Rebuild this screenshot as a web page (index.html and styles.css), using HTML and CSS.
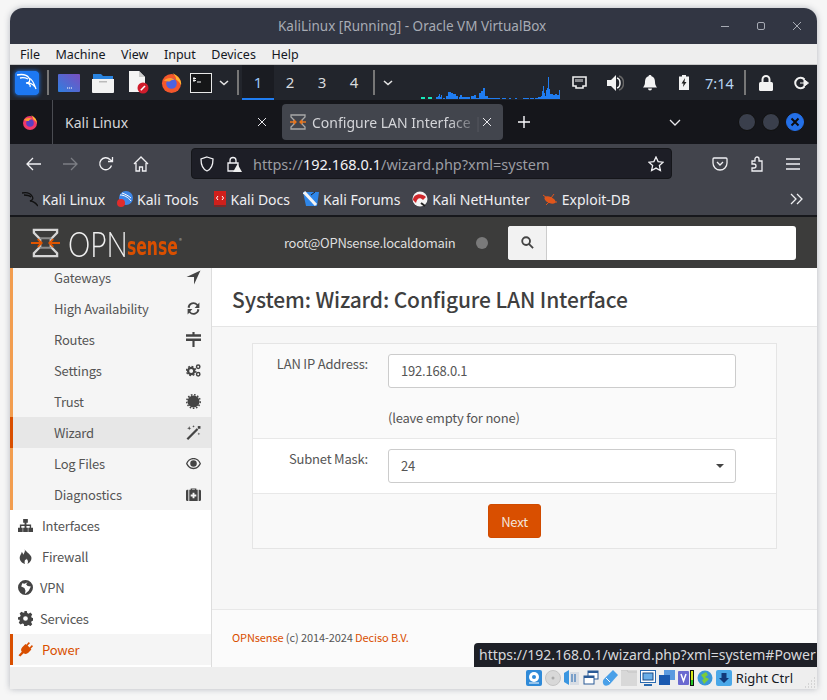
FILE: index.html
```html
<!DOCTYPE html>
<html lang="en">

<head>
    <meta charset="UTF-8">
    <title>KaliLinux [Running] - Oracle VM VirtualBox</title>
    <link rel="stylesheet" href="styles.css">
</head>

<body>
    <div class="window">
        <div class="titlebar">
            <span class="title">KaliLinux [Running] - Oracle VM VirtualBox</span>
            <svg class="win-btn min" viewBox="0 0 12 12"><path d="M2 6.5h8" /></svg>
            <svg class="win-btn max" viewBox="0 0 12 12"><rect x="2.5" y="2.5" width="7" height="7" rx="1.5" /></svg>
            <svg class="win-btn close" viewBox="0 0 12 12"><path d="M2 2l8 8M10 2l-8 8" /></svg>
        </div>
        <div class="menubar">
            <span>File</span><span>Machine</span><span>View</span><span>Input</span><span>Devices</span><span>Help</span>
        </div>

        <!-- xfce panel -->
        <div class="panel">
            <svg class="kali-btn" viewBox="0 0 24 24">
                <rect width="24" height="24" rx="3" fill="#1d78f2" />
                <path d="M2 4c5-1 10 0 12 3s0 5-3 5c3 0 5 2 4 4M14 7c3 1 5 5 7 11M5 7c4-1 6 0 8 1M11 12c3-1 7 1 9 4" fill="none" stroke="#fff" stroke-width="1.3" />
            </svg>
            <i class="sep s1"></i>
            <svg class="screen" viewBox="0 0 22 18">
                <defs>
                    <linearGradient id="g1" x1="0" y1="1" x2="1" y2="0">
                        <stop offset="0" stop-color="#2f7fe0" />
                        <stop offset="1" stop-color="#7a4fc0" />
                    </linearGradient>
                </defs>
                <rect width="22" height="18" rx="1" fill="url(#g1)" />
                <path d="M9 14h1.2M11 14h1.2M13 14h1" stroke="#fff" stroke-width="1" />
            </svg>
            <svg class="folder" viewBox="0 0 22 20">
                <path d="M1 1h8l2 2h10v3H1z" fill="#2a84e0" />
                <path d="M0 6h22v13a1 1 0 0 1-1 1H1a1 1 0 0 1-1-1z" fill="#f2f2f2" />
                <rect x="7" y="8" width="8" height="1.5" fill="#bbb" />
            </svg>
            <svg class="file" viewBox="0 0 21 23">
                <path d="M1 0h10l6 6v15H1z" fill="#f4f4f4" />
                <path d="M11 0l6 6h-6z" fill="#ccc" />
                <circle cx="15" cy="17" r="5.5" fill="#d01c2c" />
                <path d="M12.8 19.2l4.2-4.2" stroke="#fff" stroke-width="1.6" />
            </svg>
            <svg class="fox" viewBox="0 0 22 22">
                <circle cx="11" cy="12" r="10" fill="#f3572c" />
                <path d="M12 1c6 3 10 8 9 13-1-3-3-5-5-6 0-3-2-5-4-7z" fill="#ffb52e" />
                <circle cx="11" cy="12" r="5.5" fill="#4a63e0" />
                <path d="M3 9c3-3 8-4 11-1-3 0-4 1-5 2-2 0-4 0-6-1z" fill="#ff9a2e" />
            </svg>
            <svg class="term" viewBox="0 0 22 20">
                <rect x=".5" y=".5" width="21" height="19" fill="#151618" stroke="#e8e8e8" />
                <path d="M4 4v5M3 5.5h3M3 7.5h3M7 9h4" stroke="#eee" stroke-width="1" fill="none" />
            </svg>
            <svg class="chev c1" viewBox="0 0 10 6"><path d="M1 1l4 3.5L9 1" /></svg>
            <i class="sep s2"></i>
            <div class="workspaces">
                <span class="on">1</span><span>2</span><span>3</span><span>4</span>
            </div>
            <i class="sep s3"></i>
            <svg class="chev c2" viewBox="0 0 10 6"><path d="M1 1l4 3.5L9 1" /></svg>
            <svg class="netload" viewBox="0 0 145 25">
                <path d="M3 24v-2h4v2zM10 24v-2h4v2z" fill="#17e8b8" />
                <path d="M18 24v-2h2v2zM20 24v-3h1v3zM21 24v-5h1v5zM22 24v-2h1v2zM23 24v-4h1v4zM25 24v-1h2v1zM28 24v-3h2v3zM30 24v-7h3v7zM33 24v-6h2v6zM35 24v-5h3v5zM38 24v-3h2v3zM41 24v-2h1v2zM42 24v-4h2v4zM44 24v-2h6v2zM50 24v-2h2v2zM53 24v-3h3v3zM56 24v-4h2v4zM58 24v-1h3v1zM61 24v-6h2v6zM63 24v-8h2v8zM65 24v-11h2v11zM67 24v-3h3v3zM70 24v-1h6v1zM76 24v-1h6v1zM84 24v-1h4v1zM91 24v-1h2v1zM97 24v-1h2v1zM105 24v-1h6v1zM112 24v-1h4v1zM117 24v-1h3v1zM120 24v-2h3v2zM123 24v-3h1v3zM124 24v-8h1v8zM125 24v-13h1v13zM126 24v-6h1v6zM127 24v-3h1v3zM128 24v-9h1v9zM129 24v-11h1v11zM130 24v-22h1v22zM131 24v-10h1v10zM132 24v-5h3v5zM135 24v-4h2v4zM137 24v-5h2v5zM139 24v-4h2v4zM141 24v-9h1v9z" fill="#1f7cf0" />
            </svg>
            <svg class="eth" viewBox="0 0 15 13">
                <path d="M1 1h13v9h-3v2H4v-2H1z" fill="none" stroke="#eee" stroke-width="1.6" />
                <path d="M4 3v3M6 3v3M8 3v3M10 3v3" stroke="#eee" />
            </svg>
            <svg class="spk" viewBox="0 0 17 16">
                <path d="M0 5h4l5-5v16l-5-5H0z" fill="#f2f2f2" />
                <path d="M10 3c4 1 4 9 0 10" fill="none" stroke="#f2f2f2" stroke-width="1.5" />
                <path d="M12 1c6 2 6 12 0 14" fill="none" stroke="#666" stroke-width="1.5" />
            </svg>
            <svg class="bell" viewBox="0 0 14 16">
                <path d="M7 0c1 0 1.500.6 1.500 1.300C11 2 12 4 12 7c0 3 1 4 2 5.500H0C1 11 2 10 2 7c0-3 1-5 3.500-5.700C5.500.6 6 0 7 0zM5 13.500h4a2 2 0 0 1-4 0z" fill="#f4f4f4" />
            </svg>
            <svg class="batt" viewBox="0 0 10 15">
                <path d="M3 0h4v1.500h3V15H0V1.500h3z" fill="#f2f2f2" />
                <path d="M6 3L2.500 8.500h2L4 12l3.500-5h-2z" fill="#222" />
            </svg>
            <span class="clock">7:14</span>
            <i class="sep s4"></i>
            <svg class="lock" viewBox="0 0 14 16">
                <path d="M3.500 7V4.500a3.500 3.500 0 0 1 7 0V7" fill="none" stroke="#f2f2f2" stroke-width="2" />
                <rect y="7" width="14" height="9" rx="1.500" fill="#f2f2f2" />
            </svg>
            <svg class="logout" viewBox="0 0 15 14">
                <path d="M10.500 3.500A5.300 5.300 0 1 0 10.500 10.500" fill="none" stroke="#f2f2f2" stroke-width="2" />
                <path d="M6 7h5M10 3.500L14.500 7 10 10.500z" fill="#f2f2f2" stroke="#f2f2f2" stroke-width="1" />
            </svg>
        </div>

        <!-- firefox -->
        <div class="tabbar">
            <div class="tab-pin">
                <svg class="pin-fox" viewBox="0 0 16 16">
                    <circle cx="8" cy="9" r="7" fill="#f0396a" />
                    <path d="M9 1c4 2 6 5 6 9-1-3-3-4-4-5 0-2-1-3-2-4z" fill="#ffb52e" />
                    <circle cx="8" cy="9" r="3.800" fill="#5b3fc4" />
                    <path d="M2 6c2-2 6-3 8-1-2 0-3 1-3 2-2 0-3 0-5-1z" fill="#ff9a2e" />
                </svg>
            </div>
            <div class="tab">
                <span class="tab-name">Kali Linux</span>
                <svg class="tab-x" viewBox="0 0 10 10"><path d="M1 1l8 8M9 1l-8 8" /></svg>
            </div>
            <div class="tab active">
                <svg class="opn-fav" viewBox="0 0 16 16">
                    <path d="M1 1h14v2l-3 3v4l3 3v2H1v-2l3-3V6L1 3z" fill="none" stroke="#a8a8a8" stroke-width="1.300" />
                    <path d="M0 8h6M4 6l2 2-2 2M16 8h-6M12 6l-2 2 2 2" fill="none" stroke="#e9751c" stroke-width="1.300" />
                </svg>
                <span class="tab-name">Configure LAN Interface |</span>
                <svg class="tab-x" viewBox="0 0 10 10"><path d="M1 1l8 8M9 1l-8 8" /></svg>
            </div>
            <svg class="plus" viewBox="0 0 12 12"><path d="M6 0v12M0 6h12" /></svg>
            <svg class="tabs-down" viewBox="0 0 12 7"><path d="M1 1l5 5 5-5" /></svg>
            <div class="ff-btns">
                <i></i><i></i>
                <i class="x"><svg viewBox="0 0 10 10"><path d="M1.500 1.500l7 7M8.500 1.500l-7 7" /></svg></i>
            </div>
        </div>

        <div class="navbar">
            <svg class="nav back" viewBox="0 0 16 14"><path d="M15 7H1M7 1L1 7l6 6" /></svg>
            <svg class="nav fwd" viewBox="0 0 16 14"><path d="M1 7h14M9 1l6 6-6 6" /></svg>
            <svg class="nav reload" viewBox="0 0 16 16"><path d="M13.500 9.500A6 6 0 1 1 12 3.500L14 5M14.500 1v4.500H10" /></svg>
            <svg class="nav home" viewBox="0 0 16 16"><path d="M1 8l7-7 7 7M3 7v8h3.500v-4h3v4H13V7" /></svg>
            <div class="urlbar">
                <svg class="nav shield" viewBox="0 0 16 16"><path d="M8 1l6 2c0 6-1 10-6 12C3 13 2 9 2 3z" /></svg>
                <svg class="nav padlock" viewBox="0 0 16 16">
                    <path d="M4 7V4.500a3 3 0 0 1 6 0V7M2 7h10v8H2z" />
                    <path d="M11.500 8l4.500 8H7z" fill="#eee" stroke="none" />
                </svg>
                <span class="url"><span class="dim">https://</span>192.168.0.1<span class="dim">/wizard.php?xml=system</span></span>
                <svg class="nav star" viewBox="0 0 16 16"><path d="M8 1l2.100 4.600 5 .6-3.700 3.400 1 5L8 12.100 3.600 14.600l1-5L.9 6.200l5-.6z" /></svg>
            </div>
            <svg class="nav pocket" viewBox="0 0 16 14"><path d="M2 1h12a1 1 0 0 1 1 1v4a7 7 0 0 1-14 0V2a1 1 0 0 1 1-1zM5 5l3 3 3-3" /></svg>
            <svg class="nav puzzle" viewBox="0 0 16 16"><path d="M3 5h3V3a2 2 0 0 1 4 0v2h3v10H3v-3h2a2 2 0 0 0 0-4H3z" /></svg>
            <svg class="nav burger" viewBox="0 0 14 12"><path d="M0 1h14M0 6h14M0 11h14" /></svg>
        </div>

        <div class="bookmarks">
            <a class="bm">
                <svg viewBox="0 0 16 16"><path d="M0 2c4-1 8 0 10 3s0 4-2 5c2 0 5 1 8 5M2 4c3 0 5 0 7 2" fill="none" stroke="#111" stroke-width="1.300" /></svg>
                Kali Linux
            </a>
            <a class="bm tools">
                <svg viewBox="0 0 16 16"><circle cx="9" cy="7" r="7" fill="#3f87e8" /><path d="M3 4c4 0 8 2 11 6M5 2c3 1 7 3 9 5" fill="none" stroke="#fff" /><circle cx="4" cy="12" r="4" fill="#e02c2c" /></svg>
                Kali Tools
            </a>
            <a class="bm docs">
                <svg viewBox="0 0 14 16"><path d="M1 0h12v14H1z" fill="#d0201c" /><path d="M1 14h12v2H1z" fill="#7a2a2a" /><path d="M5 5L3.500 7 5 9M9 5l1.500 2L9 9" stroke="#fff" fill="none" /></svg>
                Kali Docs
            </a>
            <a class="bm">
                <svg viewBox="0 0 16 16"><path d="M0 1h16l-2 14H3z" fill="#2f86e8" /><path d="M1 1l12 13" stroke="#f4f4f4" stroke-width="3" /><path d="M8 4l4-3" stroke="#222" /></svg>
                Kali Forums
            </a>
            <a class="bm">
                <svg viewBox="0 0 16 16"><circle cx="8" cy="8" r="7.500" fill="#f4f4f4" /><path d="M1 9c0-6 8-8 13-3l-3 3C8 6 5 7 4 12z" fill="#d0282c" /><path d="M9 12l4 3" stroke="#222" stroke-width="2" /></svg>
                Kali NetHunter
            </a>
            <a class="bm">
                <svg viewBox="0 0 16 16"><ellipse cx="8" cy="9" rx="6" ry="3" transform="rotate(25 8 9)" fill="#e0561c" /><path d="M1 4l4 3M4 14l3-3M12 3L9 7M15 11h-4" stroke="#e0561c" /></svg>
                Exploit-DB
            </a>
            <svg class="more" viewBox="0 0 14 12"><path d="M1 1l5 5-5 5M7 1l5 5-5 5" /></svg>
        </div>

        <!-- opnsense page -->
        <div class="opn-head">
            <div class="logo">
                <svg class="logo-mark" viewBox="0 0 30 30">
                    <path d="M3 1.500h24v3l-6.500 6.500v8l6.500 6.500v3H3v-3l6.500-6.500v-8L3 4.500z" fill="none" stroke="#d6d6d6" stroke-width="2.400" />
                    <path d="M9 10h12M9 20h12" stroke="#8a8a8a" stroke-width="2" />
                    <path d="M0 15h11M7 11l4 4-4 4M30 15H19M23 11l-4 4 4 4" fill="none" stroke="#e05500" stroke-width="2" />
                </svg>
                <span class="logo-opn">OPN</span><span class="logo-sense">sense</span><span class="logo-r">®</span>
            </div>
            <span class="user">root@OPNsense.localdomain</span>
            <i class="status-dot"></i>
            <div class="search">
                <span class="search-btn">
                    <svg viewBox="0 0 14 14"><circle cx="5.500" cy="5.500" r="4.200" /><path d="M8.500 8.500l4.500 4.500" /></svg>
                </span>
                <span class="search-input"></span>
            </div>
        </div>

        <div class="opn-body">
            <nav class="sidebar">
                <a class="sub first">Gateways
                    <svg viewBox="0 0 14 14"><path d="M13.500.5L7.500 13.500V6.500H.5z" /></svg></a>
                <a class="sub">High Availability
                    <svg viewBox="0 0 14 14"><path d="M1.500 6a5.500 5.500 0 0 1 9.500-3l1.500-1.500V6.500H8L10 4.500A3.500 3.500 0 0 0 3.500 6.500zM12.500 8a5.500 5.500 0 0 1-9.500 3l-1.500 1.500V7.500H6L4 9.500a3.500 3.500 0 0 0 6.500-2z" /></svg></a>
                <a class="sub">Routes
                    <svg viewBox="0 0 14 14"><path d="M6 0h2v2h6v2.500H0V2h6zM0 6h14v2.500H8V14H6V8.500H0z" /></svg></a>
                <a class="sub">Settings
                    <svg viewBox="0 0 16 14"><circle cx="5.500" cy="7.500" r="3.300" fill="none" stroke="#444" stroke-width="2.400" /><circle cx="5.500" cy="7.500" r="5" fill="none" stroke="#444" stroke-width="1.400" stroke-dasharray="2 1.900" /><circle cx="13" cy="3" r="1.800" fill="none" stroke="#444" stroke-width="1.600" /><circle cx="13" cy="11" r="1.800" fill="none" stroke="#444" stroke-width="1.600" /></svg></a>
                <a class="sub">Trust
                    <svg viewBox="0 0 14 14"><circle cx="7" cy="7" r="5.600" /><circle cx="7" cy="7" r="6.300" fill="none" stroke="#444" stroke-width="1.400" stroke-dasharray="1.500 1.500" /></svg></a>
                <a class="sub on">Wizard
                    <svg viewBox="0 0 14 14"><path d="M.5 12.500L10 3l1.500 1.500L2 14zM3 1l.5 1.500L5 3l-1.500.5L3 5l-.5-1.500L1 3l1.500-.5zM7 0l.3 1 1 .3-1 .3-.3 1-.3-1-1-.3 1-.3zM12 7l.3 1 1 .3-1 .3-.3 1-.3-1-1-.3 1-.3z" /><path d="M11 1h2.500v2.500H11z" /></svg></a>
                <a class="sub">Log Files
                    <svg viewBox="0 0 16 12"><path fill-rule="evenodd" d="M8 0c4 0 6.500 2.500 8 6-1.500 3.500-4 6-8 6s-6.500-2.500-8-6c1.500-3.500 4-6 8-6zM8 1.500C5 1.500 3 3 1.500 6 3 9 5 10.500 8 10.500S13 9 14.500 6C13 3 11 1.500 8 1.500zM8 2.500a3.500 3.500 0 1 1 0 7 3.500 3.500 0 0 1 0-7z" /></svg></a>
                <a class="sub">Diagnostics
                    <svg viewBox="0 0 16 14"><path fill-rule="evenodd" d="M5 2V.5h6V2h1.500v12h-9V2zM6.500 2h3V1.500h-3zM7 5v2H5v2h2v2h2V9h2V7H9V5zM0 3.500A1.500 1.500 0 0 1 1.500 2h1v12h-1A1.500 1.500 0 0 1 0 12.500zM13.500 2h1A1.500 1.500 0 0 1 16 3.500v9a1.500 1.500 0 0 1-1.500 1.500h-1z" /></svg></a>
                <a class="top"><svg viewBox="0 0 16 14"><path d="M5.500 0h5v4H9v2h5v3.500h2V14h-5V9.500h1.500V7.500H9v2h1.500V14h-5V9.500H7v-2H3.500v2H5V14H0V9.500h2V6h5V4H5.500z" /></svg>Interfaces</a>
                <a class="top"><svg viewBox="0 0 14 16"><path d="M6 0c1 3 5 4 7 8 1.500 4-2 7-4 8 1-2 1-4-1-6 0 2-1 2-1.500 1 0 2-1 3 0 5C3 15 0 12 1 8c.5-2 2-3 2-5 1 1 1.500 2 1.500 3C6 4 7 2 6 0z" /></svg>Firewall</a>
                <a class="top vpn"><svg viewBox="0 0 14 14"><path fill-rule="evenodd" d="M7 0a7 7 0 1 1 0 14A7 7 0 0 1 7 0zM9 2L6 3.500 4 3 3 6l3 1.500 1 2.500L6.500 13 10 10l2-4-3-.5L7.500 4z" /></svg>VPN</a>
                <a class="top svc"><svg viewBox="0 0 14 14"><path fill-rule="evenodd" d="M5.800 0h2.400l.4 1.900 1.300.6 1.700-1 1.700 1.700-1 1.700.5 1.300 1.900.4v2.400l-1.900.4-.5 1.300 1 1.700-1.700 1.700-1.700-1-1.300.5L8.200 14H5.800l-.4-1.900-1.300-.5-1.700 1-1.700-1.700 1-1.700-.6-1.300L0 8.200V5.800l1.900-.4.6-1.300-1-1.700 1.700-1.700 1.700 1 1.300-.6zM7 4.800a2.200 2.200 0 1 0 0 4.400 2.200 2.200 0 0 0 0-4.400z" /></svg>Services</a>
                <a class="top power"><svg viewBox="0 0 16 16"><path d="M11.500 0l1.300 1.300-2.500 2.500 2 2 2.500-2.500L16 4.600l-2.500 2.500.8.800L11 11.500c-1.500 1.500-3.500 1.500-5 .5l-3.500 3.500-2-1.500L4 10.500C3 9 3 7 4.500 5.500L8 2l.9.9z" /></svg>Power</a>
            </nav>

            <main class="content">
                <div class="page-title">
                    <h1>System: Wizard: Configure LAN Interface</h1>
                </div>
                <div class="form-wrap">
                    <div class="form-box">
                        <div class="form-row r1">
                            <label>LAN IP Address:</label>
                            <div class="field">
                                <div class="input">192.168.0.1</div>
                                <p class="hint">(leave empty for none)</p>
                            </div>
                        </div>
                        <div class="form-row r2">
                            <label>Subnet Mask:</label>
                            <div class="field">
                                <div class="input select">24<i class="caret"></i></div>
                            </div>
                        </div>
                        <div class="form-row r3">
                            <button class="next">Next</button>
                        </div>
                    </div>
                </div>
                <footer class="foot"><a>OPNsense</a> (c) 2014-2024 <a>Deciso B.V.</a></footer>
            </main>
        </div>

        <div class="statuslink">https://192.168.0.1/wizard.php?xml=system#Power</div>

        <!-- virtualbox status bar -->
        <div class="vbox-status">
            <svg viewBox="0 0 16 16"><rect width="16" height="16" rx="2" fill="#2f8ad8" /><circle cx="8" cy="7" r="5" fill="#fff" /><circle cx="8" cy="7" r="2" fill="#2f8ad8" /><path d="M3 13h10" stroke="#fff" /></svg>
            <svg viewBox="0 0 16 16"><circle cx="8" cy="8" r="7.500" fill="#d8d8d8" stroke="#c4c4c4" /><circle cx="8" cy="8" r="1.500" fill="#aaa" /></svg>
            <svg viewBox="0 0 16 16"><path d="M0 3l5-3v15L0 12z" fill="#3a96e0" /><path d="M6 2h9v13H6z" fill="#d8dde4" /><path d="M8 4v8M11 4v8" stroke="#5a8ac0" stroke-width="1.500" /></svg>
            <svg viewBox="0 0 16 16"><rect x="5" y="1" width="10" height="8" fill="#fff" stroke="#2a5a96" /><rect x="1" y="6" width="10" height="8" fill="#fff" stroke="#2a5a96" /><path d="M1 7h10M5 2h10" stroke="#2a5a96" stroke-width="2" /></svg>
            <svg viewBox="0 0 16 16"><path d="M11 0l5 5-8 9c-2 2-5 2-6 1s-2-4 0-6z" fill="#4aa0e8" /><path d="M4 8l4 4" stroke="#fff" /></svg>
            <svg viewBox="0 0 16 16"><rect width="16" height="16" fill="#d8d8d8" /><path d="M0 0h6l1 2h9" fill="none" stroke="#c4c4c4" /></svg>
            <svg viewBox="0 0 16 16"><rect x=".5" y=".5" width="15" height="12" fill="#fff" stroke="#2a6ab0" /><rect x="3" y="3" width="10" height="7" fill="#6aaee8" stroke="#1a4a86" /><path d="M4 15h8" stroke="#2a6ab0" stroke-width="2" /></svg>
            <svg viewBox="0 0 16 16"><rect x="5" y="0" width="11" height="10" fill="#5a9ae0" /><rect x="0" y="5" width="11" height="10" fill="#1a5ab0" /></svg>
            <svg class="v-ind" viewBox="0 0 16 16"><rect x="0" y="1" width="11" height="14" rx="1" fill="#6a6ad0" /><path d="M3 4l2.500 7L8 4" fill="none" stroke="#fff" stroke-width="1.500" /><rect x="12" width="4" height="16" fill="#111" /><rect x="13" y="1" width="2" height="9" fill="#d8e818" /><rect x="13" y="10" width="2" height="5" fill="#28c828" /></svg>
            <svg viewBox="0 0 16 16"><circle cx="8" cy="8" r="7.500" fill="#3a96d8" /><path d="M4 5l5-3 2 3-3 2 4 2-5 5-2-4 2-1z" fill="#7ccc3a" /></svg>
            <svg viewBox="0 0 16 16"><rect width="16" height="16" rx="2" fill="#4aa8e8" /><path d="M5.500 3h5v5H13l-5 5-5-5h2.500z" fill="#123a7a" /></svg>
            <span class="hostkey">Right Ctrl</span>
            <svg class="grip" viewBox="0 0 12 12"><path d="M9 1h1M6 4h1M9 4h1M3 7h1M6 7h1M9 7h1M0 10h1M3 10h1M6 10h1M9 10h1" stroke="#bbb" /></svg>
        </div>
    </div>
</body>

</html>
```

FILE: styles.css
```css
* {
    box-sizing: border-box;
}

html, body {
    margin: 0;
    height: 100%;
}

body {
    background: #f6f6f6;
    font-family: "Noto Sans", sans-serif;
    overflow: hidden;
}

svg {
    display: block;
    flex: none;
}

/* window frame */
.window {
    position: relative;
    width: 807px;
    height: 681px;
    margin: 8px 0 0 10px;
    border-radius: 13px 13px 0 0;
    overflow: hidden;
    display: flex;
    flex-direction: column;
    background: #eee;
    box-shadow: 0 0 6px rgba(60, 70, 90, .35);
}

.titlebar {
    height: 36px;
    flex: none;
    background: #323643;
    display: flex;
    align-items: center;
    justify-content: flex-end;
    position: relative;
    padding-right: 14px;
}

.title {
    position: absolute;
    left: 268px;
    color: #a7abb4;
    font-size: 13.5px;
}

.win-btn {
    width: 12px;
    height: 12px;
    margin-left: 24px;
    fill: none;
    stroke: #a7abb4;
    stroke-width: 1;
}

.menubar {
    height: 21px;
    flex: none;
    background: #eee;
    border-bottom: 1px solid #c8c8c8;
    display: flex;
    align-items: center;
    gap: 15.5px;
    padding-left: 10px;
    font-size: 12.5px;
    color: #15181e;
}

/* panel */
.panel {
    height: 35px;
    flex: none;
    background: #22252c;
    display: flex;
    align-items: center;
    padding-left: 5px;
}

.kali-btn { width: 24px; height: 24px; box-shadow: 0 0 4px #1d78f2; border-radius: 3px; }

.sep {
    display: block;
    width: 2px;
    height: 25px;
    background: #777;
    flex: none;
}

.s1 { margin-left: 8px; }
.s2 { margin-left: 8px; }
.s3 { margin-left: 3px; }
.s4 { margin-left: 12px; }

.screen { width: 22px; height: 18px; margin-left: 9px; }
.folder { width: 22px; height: 20px; margin-left: 12px; }
.file { width: 21px; height: 23px; margin-left: 14px; }
.fox { width: 21px; height: 21px; margin-left: 12px; }
.term { width: 22px; height: 20px; margin-left: 8px; }

.chev {
    width: 10px;
    height: 6px;
    fill: none;
    stroke: #e4e4e4;
    stroke-width: 1.6;
}

.c1 { margin-left: 7px; }
.c2 { margin-left: 8px; }

.workspaces {
    margin-left: 3px;
    display: flex;
    height: 100%;
}

.workspaces span {
    width: 32px;
    color: #d8dade;
    font-size: 15px;
    display: flex;
    align-items: center;
    justify-content: center;
    border-bottom: 2px solid transparent;
}

.workspaces .on {
    background: #1a1c22;
    color: #9cc8f4;
    border-bottom-color: #1f7cf0;
}

.netload { width: 145px; height: 25px; margin: auto 0 0 25px; }
.eth { width: 15px; height: 13px; margin-left: 9px; }
.spk { width: 17px; height: 16px; margin-left: 20px; }
.bell { width: 14px; height: 16px; margin-left: 19px; }
.batt { width: 10px; height: 15px; margin-left: 22px; }

.clock {
    width: 27px;
    margin-left: 16px;
    color: #b9d6f2;
    font-size: 14.5px;
    white-space: nowrap;
}

.lock { width: 14px; height: 16px; margin-left: 13px; }
.logout { width: 15px; height: 14px; margin-left: 21px; }

/* firefox chrome */
.tabbar {
    height: 44px;
    flex: none;
    background: #15161b;
    display: flex;
    align-items: center;
    color: #fbfbfe;
}

.tab-pin {
    width: 43px;
    height: 100%;
    padding-left: 12px;
    display: flex;
    align-items: center;
    border-right: 1px solid #4a4c52;
    flex: none;
}

.pin-fox { width: 16px; height: 16px; }

.tab {
    width: 221px;
    height: 36px;
    display: flex;
    align-items: center;
    padding: 0 7px 0 12px;
    font-size: 14px;
    flex: none;
    border-radius: 4px;
}

.tab-name {
    flex: 1;
    overflow: hidden;
    white-space: nowrap;
    color: #d6d6da;
}

.tab.active {
    margin-left: 8px;
    background: #42454d;
    padding: 0 11px 0 8px;
}

.tab.active .tab-name {
    color: #d4d5d9;
    -webkit-mask-image: linear-gradient(to right, #000 80%, transparent 100%);
    mask-image: linear-gradient(to right, #000 80%, transparent 100%);
}

.opn-fav { width: 16px; height: 16px; margin-right: 6px; }

.tab-x {
    width: 10px;
    height: 10px;
    fill: none;
    stroke: #e8e8ec;
    stroke-width: 1;
}

.plus {
    width: 12px;
    height: 12px;
    margin-left: 15px;
    fill: none;
    stroke: #fbfbfe;
    stroke-width: 1.4;
}

.tabs-down {
    width: 12px;
    height: 7px;
    margin-left: 139px;
    fill: none;
    stroke: #e8e8ec;
    stroke-width: 1.3;
}

.ff-btns {
    margin-left: 57px;
    display: flex;
    gap: 6px;
}

.ff-btns i {
    display: block;
    width: 18px;
    height: 18px;
    border-radius: 50%;
    background: #3a3f4c;
    border: 1px solid #111;
}

.ff-btns .x {
    background: #2470e8;
    border-color: #2470e8;
    padding: 3px;
}

.ff-btns svg {
    fill: none;
    stroke: #0c0c10;
    stroke-width: 2;
}

.navbar {
    height: 39px;
    flex: none;
    background: #42444c;
    display: flex;
    align-items: center;
}

.nav {
    fill: none;
    stroke: #f0f0f3;
    stroke-width: 1.3;
    width: 16px;
    height: 16px;
}

.back { height: 14px; margin-left: 16px; }
.fwd { height: 14px; margin-left: 20px; stroke: #7c7e84; }
.reload { margin-left: 20px; }
.home { margin-left: 19px; }

.urlbar {
    width: 481px;
    height: 31px;
    margin-left: 42px;
    background: #1d1e26;
    border: 1px solid #15161a;
    border-radius: 4px;
    display: flex;
    align-items: center;
    padding: 0 7px;
}

.padlock { margin-left: 11px; }

.url {
    flex: 1;
    margin-left: 11px;
    color: #f2f2f5;
    font-size: 14.5px;
    white-space: nowrap;
}

.url .dim { color: #9b9ca2; }

.pocket { height: 14px; margin-left: 40px; }
.puzzle { margin-left: 21px; }
.burger { width: 14px; height: 12px; margin-left: 21px; }

.bookmarks {
    height: 34px;
    flex: none;
    background: #42444c;
    border-bottom: 2px solid #17181c;
    display: flex;
    align-items: center;
    padding-left: 12px;
    color: #efeff2;
    font-size: 14px;
}

.bm {
    display: flex;
    align-items: center;
    gap: 4px;
    margin-right: 12px;
    white-space: nowrap;
}

.bm svg { width: 16px; height: 16px; }

.tools { margin-right: 14px; }
.docs { margin-right: 13px; }
.docs svg { width: 14px; }

.more {
    width: 14px;
    height: 12px;
    margin-left: auto;
    margin-right: 13px;
    fill: none;
    stroke: #efeff2;
    stroke-width: 1.3;
}

/* opnsense */
.opn-head {
    height: 51px;
    flex: none;
    background: #3c3c3b;
    display: flex;
    align-items: center;
    font-family: "Noto Sans CJK SC", sans-serif;
}

.logo {
    width: 274px;
    padding-left: 21px;
    display: flex;
    align-items: center;
    height: 30px;
    flex: none;
    position: relative;
}

.logo-mark { width: 29px; height: 30px; }

.logo-opn {
    width: 59px;
    margin-left: 8px;
    font-family: "Lato", sans-serif;
    font-weight: 300;
    font-size: 36px;
    line-height: 30px;
    color: #efefef;
    transform: scaleX(.78);
    transform-origin: left center;
}

.logo-sense {
    width: 51px;
    margin-top: 8px;
    font-family: "DejaVu Sans", sans-serif;
    font-weight: 700;
    font-size: 24px;
    line-height: 22px;
    color: #d94f00;
    transform: scaleX(.65);
    transform-origin: left center;
}

.logo-r {
    margin: -4px 0 0 1px;
    font-size: 6px;
    line-height: 8px;
    color: #aaa;
}

.user {
    width: 172px;
    color: #dedede;
    font-size: 13px;
    letter-spacing: -.3px;
    white-space: nowrap;
}

.status-dot {
    width: 12px;
    height: 12px;
    margin-left: 20px;
    border-radius: 50%;
    background: #7a7a7a;
    flex: none;
}

.search {
    margin-left: 20px;
    width: 288px;
    height: 34px;
    display: flex;
    border-radius: 3px;
    overflow: hidden;
    background: #fff;
}

.search-btn {
    width: 39px;
    background: #f2f2f2;
    border-right: 1px solid #ccc;
    display: flex;
    align-items: center;
    justify-content: center;
}

.search-btn svg {
    width: 13px;
    height: 13px;
    fill: none;
    stroke: #444;
    stroke-width: 2;
}

.opn-body {
    flex: 1;
    min-height: 0;
    display: flex;
    background: #fff;
    font-family: "Noto Sans CJK SC", sans-serif;
    color: #555;
    letter-spacing: -.2px;
}

.sidebar {
    width: 202px;
    flex: none;
    overflow: hidden;
    border-right: 1px solid #ddd;
    display: flex;
    flex-direction: column;
    font-size: 13px;
    background: #fff;
}

.sidebar a {
    height: 31px;
    flex: none;
    display: flex;
    align-items: center;
}

.sidebar svg {
    fill: #444;
    width: 15px;
    height: 15px;
}

.sub {
    background: #f5f5f5;
    border-left: 3px solid #f29d4f;
    padding: 0 10px 0 41px;
    justify-content: space-between;
}

.sub.first { margin-top: -6px; }

.sub.on {
    background: #e7e7e7;
    border-left-color: #d94f00;
}

.top {
    padding-left: 8px;
    gap: 9px;
}

.vpn, .svc { gap: 7px; }

.power {
    background: #f5f5f5;
    border-left: 3px solid #d94f00;
    padding-left: 5px;
    color: #d94f00;
}

.sidebar .power svg { fill: #d94f00; }

.content {
    flex: 1;
    min-width: 0;
    display: flex;
    flex-direction: column;
    background: #f7f7f7;
}

.page-title {
    height: 59px;
    flex: none;
    background: #fff;
    border-bottom: 1px solid #e5e5e5;
    display: flex;
    align-items: center;
    padding: 4px 0 0 20px;
}

.page-title h1 {
    margin: 0;
    font-size: 21px;
    font-weight: 500;
    letter-spacing: -.13px;
    color: #3f3f3f;
    line-height: 28px;
}

.form-wrap {
    height: 282px;
    flex: none;
    padding: 16px 0 0 40px;
}

.form-box {
    width: 525px;
    height: 206px;
    border: 1px solid #e5e5e5;
    display: flex;
    flex-direction: column;
    font-size: 13px;
}

.form-row {
    display: flex;
}

.form-row label {
    width: 115px;
    text-align: right;
    line-height: 20px;
    flex: none;
}

.field {
    margin-left: 20px;
    width: 348px;
}

.r1 {
    height: 95px;
    background: #fafafa;
    border-bottom: 1px solid #e8e8e8;
    padding-top: 10px;
}

.r2 {
    height: 55px;
    background: #fff;
    border-bottom: 1px solid #e8e8e8;
    padding-top: 10px;
}

.r3 {
    flex: 1;
    background: #f9f9f9;
    justify-content: center;
    align-items: center;
}

.input {
    height: 34px;
    background: #fff;
    border: 1px solid #ccc;
    border-radius: 3px;
    padding: 0 12px;
    display: flex;
    align-items: center;
    justify-content: space-between;
    line-height: 20px;
    color: #555;
}

.caret {
    width: 0;
    height: 0;
    border: 4px solid transparent;
    border-top-color: #444;
    border-bottom: 0;
}

.select { padding-right: 11px; }

.hint {
    margin: 20px 0 0;
    line-height: 20px;
}

.next {
    width: 53px;
    height: 34px;
    background: #d94f00;
    color: #f4e5dc;
    border: 1px solid #d04b00;
    border-radius: 3px;
    font: inherit;
    letter-spacing: -.2px;
    padding: 0;
}

.foot {
    flex: 1;
    background: #fbfbfb;
    border-top: 1px solid #e8e8e8;
    padding: 18px 0 0 20px;
    font-size: 11px;
    letter-spacing: -.1px;
    line-height: 18px;
}

.foot a { color: #d94f00; }

/* overlays */
.statuslink {
    position: absolute;
    right: 0;
    bottom: 22px;
    width: 343px;
    height: 24px;
    background: #1e2027;
    color: #d8d8dc;
    border-radius: 4px 0 0 0;
    font-size: 14px;
    line-height: 24px;
    padding-left: 5px;
    white-space: nowrap;
    overflow: hidden;
}

.vbox-status {
    height: 22px;
    flex: none;
    background: #eee;
    display: flex;
    align-items: center;
    justify-content: flex-end;
    gap: 3px;
    color: #15181e;
    font-size: 13px;
}

.vbox-status svg { width: 16px; height: 16px; }

.hostkey { margin: 0 9px 0 1px; }

.vbox-status .grip { width: 12px; height: 12px; align-self: flex-end; }
```
